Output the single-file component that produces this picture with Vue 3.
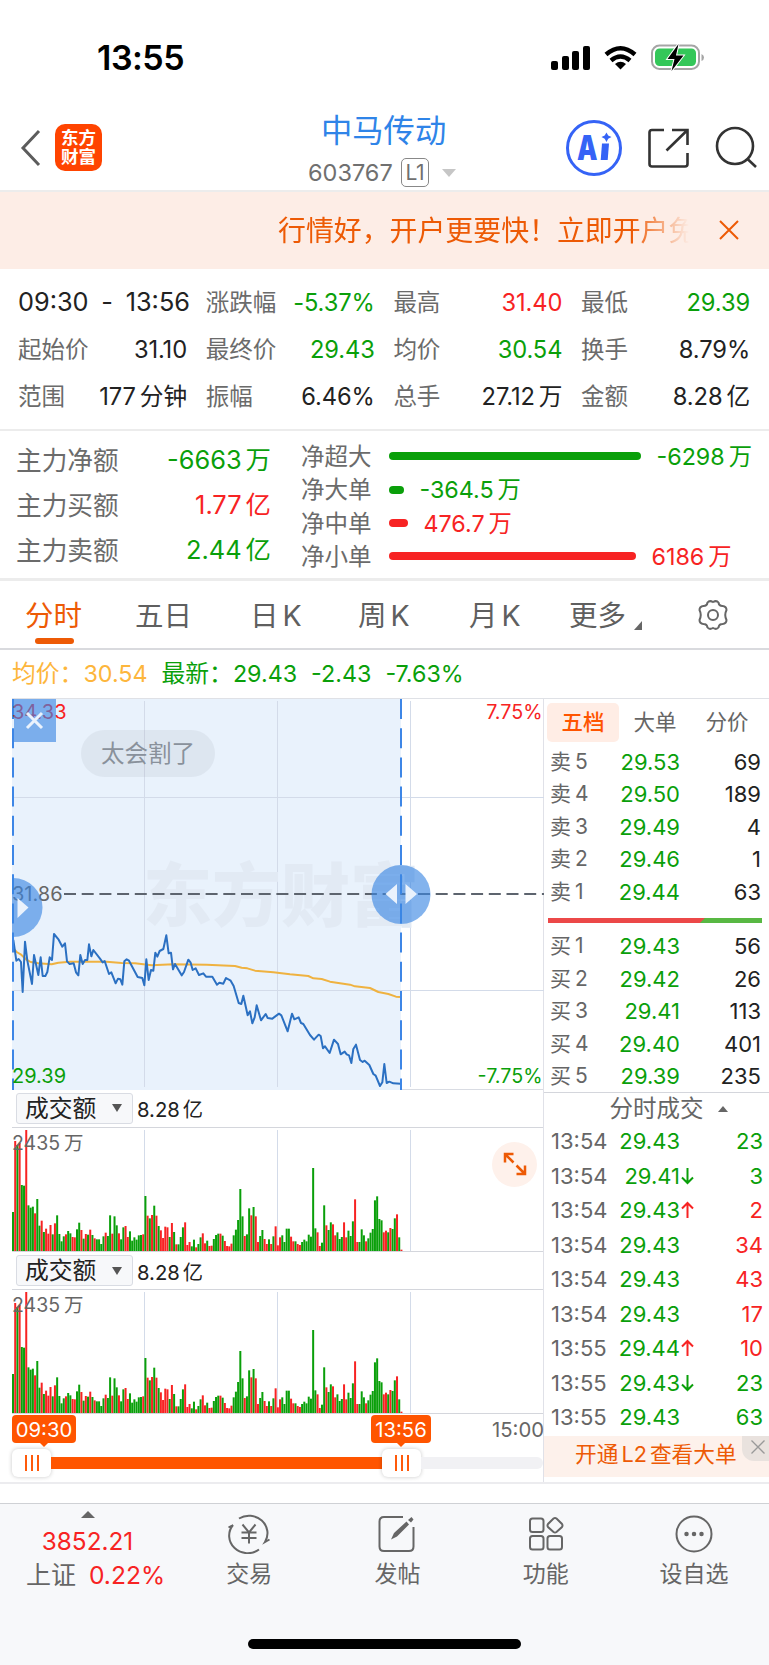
<template>
  <div class="page">
    <header class="status">
      <span class="clock">13:55</span>
      <svg class="signals" width="156" height="30" viewBox="0 0 156 30">
        <rect x="0" y="17" width="7" height="9" rx="2" />
        <rect x="11" y="12" width="7" height="14" rx="2" />
        <rect x="21" y="7" width="7" height="19" rx="2" />
        <rect x="32" y="2" width="7" height="24" rx="2" />
        <path class="wave" d="M55 10.5Q69.500 -2 84 10.500" />
        <path class="wave" d="M60 16.500Q69.500 8.500 79 16.500" />
        <path d="M69.500 25.500L64 20Q69.500 15.500 75 20Z" />
        <rect class="cell" x="101" y="1.500" width="47" height="23.500" rx="7.500" />
        <rect class="charge" x="104" y="4.500" width="41" height="17.500" rx="4.500" />
        <path class="cap" d="M150.500 10Q153 11 153 13.500T150.500 17Z" />
        <path class="bolt" d="M127.500 0L116.500 15H123.500L120.500 27L132.500 11.500H125Z" />
      </svg>
    </header>

    <nav class="nav">
      <svg class="back" width="22" height="38" viewBox="0 0 22 38"><path d="M19 2L3 19L19 36" /></svg>
      <div class="logo"><span>东方</span><span>财富</span></div>
      <div class="title">
        <h1>中马传动</h1>
        <p>603767<b>L1</b><i></i></p>
      </div>
      <svg class="nav-icons" width="196" height="60" viewBox="0 0 196 60">
        <circle class="ai-ring" cx="30" cy="30" r="26.500" />
        <text class="ai" x="13" y="41.500" textLength="20.500" lengthAdjust="spacingAndGlyphs">A</text>
        <path class="ai-fill" d="M38 25.500H45L43.700 42H36.700Z" />
        <path class="ai-fill" d="M42.500 14.500L44.200 17.500L47.500 19L44.200 20.700L42.500 24L40.700 20.700L37.500 19L40.700 17.500Z" />
        <path class="line" d="M100 12H88Q85.500 12 85.500 14.500V46Q85.500 48.500 88 48.500H121Q123.500 48.500 123.500 46V35M108 12H123.500V27M123 12.500L102.500 32.500" />
        <circle class="line" cx="171" cy="28" r="18" />
        <path class="line" d="M183.500 41L192 49" />
      </svg>
    </nav>

    <div class="banner">
      <span>行情好，开户更要快！立即开户免</span>
      <svg width="22" height="22" viewBox="0 0 22 22"><path d="M2 2L20 20M20 2L2 20" /></svg>
    </div>

    <section class="stats">
      <div class="range">09:30 <em>-</em> 13:56</div>
      <div v-for="s in stats" :key="s.label" class="stat">
        <span>{{ s.label }}</span>
        <b :class="s.tone">{{ s.value }}<u v-if="s.unit">{{ s.unit }}</u></b>
      </div>
    </section>

    <section class="flow">
      <div class="main-flow">
        <div v-for="m in mainFlow" :key="m.label">
          <span>{{ m.label }}</span>
          <b :class="m.tone">{{ m.value }}<u>{{ m.unit }}</u></b>
        </div>
      </div>
      <div class="net-flow">
        <div v-for="n in netFlow" :key="n.label">
          <span>{{ n.label }}</span>
          <i :class="n.tone" :style="{ width: n.width + 'px' }"></i>
          <b :class="n.tone">{{ n.value }}<u>万</u></b>
        </div>
      </div>
    </section>

    <div class="tabs">
      <span class="tab active">分时</span>
      <span class="tab">五日</span>
      <span class="tab">日<u>K</u></span>
      <span class="tab">周<u>K</u></span>
      <span class="tab">月<u>K</u></span>
      <span class="tab more">更多</span>
      <svg width="34" height="34" viewBox="0 0 34 34">
        <path d="M11.500 4.500Q13.500 2 17 4Q20.500 2 22.500 4.500Q23 8 26.500 8Q30.500 8.500 30.500 12Q28 17 30.500 22Q30.500 25.500 26.500 26Q23 26 22.500 29.500Q20.500 32 17 30Q13.500 32 11.500 29.500Q11 26 7.500 26Q3.500 25.500 3.500 22Q6 17 3.500 12Q3.500 8.500 7.500 8Q11 8 11.500 4.500Z" />
        <circle cx="17" cy="17" r="5" />
      </svg>
    </div>

    <div class="quote">
      <span class="avg">均价：</span><span class="avg num">30.54</span>
      <span class="green latest">最新：</span><span class="green num">29.43</span>
      <span class="green num delta">-2.43</span><span class="green num delta">-7.63%</span>
    </div>

    <div class="board">
      <div class="charts">
        <div class="price-chart">
          <svg width="532" height="391" viewBox="12 699 532 391">
            <rect class="selection" x="12" y="699" width="389" height="391" />
            <path class="grid" d="M144.500 701V1087M277.500 701V1087M410.500 701V1087M12 797.500H544M12 990.500H544" />
            <text class="watermark" x="143" y="921">东方财富</text>
            <path class="mid" d="M64 894H544" />
            <g transform="translate(0 900) scale(.33333)">
              <polyline class="avg-line" :points="avgPoints" />
              <polyline class="price-line" :points="pricePoints" />
            </g>
            <path class="edge" d="M13 699V1090M401 699V1090" />
            <text class="red" x="12" y="718.500">34.33</text>
            <text class="red end" x="542.500" y="718.500">7.75%</text>
            <text class="gray" x="12" y="900.500">31.86</text>
            <text class="green" x="12" y="1082.500">29.39</text>
            <text class="green end" x="542.500" y="1082.500">-7.75%</text>
            <rect class="knob" x="14" y="699" width="42" height="43" />
            <path class="cross" d="M27 713L42 728M42 713L27 728" />
            <circle class="knob" cx="13" cy="907.500" r="29.500" />
            <path class="arrow" d="M17.500 898L28.500 907.500L17.500 918Z" />
            <circle class="knob" cx="401" cy="894.500" r="29.500" />
            <path class="arrow" d="M397 884L385.500 894L397 904ZM405.500 884L417 894L405.500 904Z" />
          </svg>
          <div class="bubble">太会割了</div>
        </div>

        <div v-for="n in 2" :key="n" class="volume">
          <div class="picker">
            <div>成交额<i></i></div>
            <span>8.28<u>亿</u></span>
          </div>
          <div class="bars">
            <svg width="532" height="123" viewBox="0 0 532 123">
              <path class="grid" d="M132.500 2V123M265.500 2V123M398.500 2V123" />
              <rect
                v-for="(bar, i) in volumes"
                :key="i"
                :class="bar.tone"
                :x="i * 2.207"
                :y="123 - bar.height"
                width="2"
                :height="bar.height"
              />
            </svg>
            <span>2435<u>万</u></span>
            <div v-if="n === 1" class="expand">
              <svg width="24" height="24" viewBox="0 0 24 24">
                <path d="M10.500 2H2V10.500M2 2L10.500 10.500M13.500 22H22V13.500M22 22L13.500 13.500" />
              </svg>
            </div>
          </div>
        </div>

        <div class="timeline">
          <div class="times">
            <span class="flag">09:30</span>
            <span class="flag last">13:56</span>
            <span class="close">15:00</span>
          </div>
          <div class="slider">
            <span class="grip"><i></i><i></i><i></i></span>
            <span class="fill"></span>
            <span class="grip"><i></i><i></i><i></i></span>
            <span class="rest"></span>
          </div>
        </div>
      </div>

      <aside class="depth">
        <div class="depth-tabs"><span class="on">五档</span><span>大单</span><span>分价</span></div>
        <div v-for="r in sells" :key="'s' + r[0]" class="level">
          <span>卖<u>{{ r[0] }}</u></span><b>{{ r[1] }}</b><em>{{ r[2] }}</em>
        </div>
        <div class="ratio"></div>
        <div v-for="r in buys" :key="'b' + r[0]" class="level">
          <span>买<u>{{ r[0] }}</u></span><b>{{ r[1] }}</b><em>{{ r[2] }}</em>
        </div>
        <div class="deals-head">分时成交<i></i></div>
        <div v-for="(d, i) in deals" :key="i" class="deal">
          <span>{{ d[0] }}</span>
          <b>{{ d[1] }}</b>
          <svg width="15" height="20" viewBox="0 0 15 20">
            <path v-if="d[3] === 'up'" class="up" d="M7.500 18V3M2 8.500L7.500 3L13 8.500" />
            <path v-if="d[3] === 'down'" class="down" d="M7.500 2V17M2 11.500L7.500 17L13 11.500" />
          </svg>
          <em :class="d[4]">{{ d[2] }}</em>
        </div>
        <div class="promo">
          开通<u>L2</u><u>查看大单</u>
          <span>
            <svg width="16" height="16" viewBox="0 0 16 16"><path d="M1.500 1.500L14.500 14.500M14.500 1.500L1.500 14.500" /></svg>
          </span>
        </div>
      </aside>
    </div>

    <footer class="footer">
      <div class="actions">
        <div class="index">
          <i></i>
          <p class="red">3852.21</p>
          <p>上证<b class="red">0.22%</b></p>
        </div>
        <div class="action">
          <svg width="44" height="40" viewBox="0 0 44 40">
            <path d="M12 4.500A18.500 17.500 0 0 1 38 28L42.500 25.500M32 35.500A18.500 17.500 0 0 1 6 11L1.500 13.500" />
            <path d="M15.500 10.500L22 18.500L28.500 10.500M22 18.500V29.500M14.500 18.500H29.500M14.500 24H29.500" />
          </svg>
          <span>交易</span>
        </div>
        <div class="action">
          <svg width="44" height="40" viewBox="0 0 44 40">
            <path d="M28 3H9Q4.500 3 4.500 7.500V32.500Q4.500 37 9 37H34Q38.500 37 38.500 32.500V13" />
            <path class="pen" d="M16 25.500L19 19L31.500 7.500L34 10.500L22 22.500ZM33 6L36.500 3L38.500 5.500L36 8.500Z" />
          </svg>
          <span>发帖</span>
        </div>
        <div class="action">
          <svg width="44" height="40" viewBox="0 0 44 40">
            <rect x="6" y="4.500" width="13.500" height="13.500" rx="2.500" />
            <rect x="6" y="22" width="13.500" height="13.500" rx="2.500" />
            <rect x="23.500" y="22" width="14.500" height="13.500" rx="2.500" />
            <path d="M29.500 4.500Q31 3.500 32.500 4.500L38 10Q39 11.500 38 13L32.500 18Q31 19 29.500 18L24 13Q23 11.500 24 10Z" />
          </svg>
          <span>功能</span>
        </div>
        <div class="action">
          <svg width="44" height="40" viewBox="0 0 44 40">
            <circle cx="22" cy="20" r="17.500" />
            <path class="dots" d="M14.500 20H14.510M22 20H22.010M29.500 20H29.510" />
          </svg>
          <span>设自选</span>
        </div>
      </div>
      <div class="home"></div>
    </footer>
  </div>
</template>

<script setup>
const stats = [
  { label: '涨跌幅', value: '-5.37%', tone: 'green' },
  { label: '最高', value: '31.40', tone: 'red' },
  { label: '最低', value: '29.39', tone: 'green' },
  { label: '起始价', value: '31.10' },
  { label: '最终价', value: '29.43', tone: 'green' },
  { label: '均价', value: '30.54', tone: 'green' },
  { label: '换手', value: '8.79%' },
  { label: '范围', value: '177', unit: '分钟' },
  { label: '振幅', value: '6.46%' },
  { label: '总手', value: '27.12', unit: '万' },
  { label: '金额', value: '8.28', unit: '亿' },
];

const mainFlow = [
  { label: '主力净额', value: '-6663', unit: '万', tone: 'green' },
  { label: '主力买额', value: '1.77', unit: '亿', tone: 'red' },
  { label: '主力卖额', value: '2.44', unit: '亿', tone: 'green' },
];

const netFlow = [
  { label: '净超大', value: '-6298', width: 252, tone: 'green' },
  { label: '净大单', value: '-364.5', width: 15, tone: 'green' },
  { label: '净中单', value: '476.7', width: 19, tone: 'red' },
  { label: '净小单', value: '6186', width: 247, tone: 'red' },
];

const sells = [
  [5, '29.53', 69],
  [4, '29.50', 189],
  [3, '29.49', 4],
  [2, '29.46', 1],
  [1, '29.44', 63],
];

const buys = [
  [1, '29.43', 56],
  [2, '29.42', 26],
  [3, '29.41', 113],
  [4, '29.40', 401],
  [5, '29.39', 235],
];

// time, price, hands, tick direction, side
const deals = [
  ['13:54', '29.43', 23, '', 'green'],
  ['13:54', '29.41', 3, 'down', 'green'],
  ['13:54', '29.43', 2, 'up', 'red'],
  ['13:54', '29.43', 34, '', 'red'],
  ['13:54', '29.43', 43, '', 'red'],
  ['13:54', '29.43', 17, '', 'red'],
  ['13:55', '29.44', 10, 'up', 'red'],
  ['13:55', '29.43', 23, 'down', 'green'],
  ['13:55', '29.43', 63, '', 'green'],
];

const avgPoints =
  '40,145 50,156 62,163 78,178 92,186 115,190 155,193 175,188 210,185 320,185 365,189 405,190 455,196 520,193 620,194 705,198 725,203 742,205 765,212 820,217 870,223 925,228 940,235 965,237 990,245 1050,254 1065,259 1110,264 1135,276 1165,282 1188,290 1200,291';

const pricePoints =
  '40,120 49,182 56,177 63,186 68,276 75,125 82,182 96,252 102,165 115,225 122,172 128,228 136,228 142,216 149,172 156,180 162,102 176,119 187,140 195,130 201,184 209,192 221,190 228,217 235,226 241,165 248,192 255,180 262,180 267,133 274,169 280,150 300,176 308,187 314,183 327,222 334,217 347,250 354,236 361,238 367,254 373,184 380,178 387,182 413,231 427,234 433,256 439,178 446,240 453,210 460,212 466,158 472,170 479,153 490,147 499,106 506,160 513,158 519,208 525,192 545,226 552,216 565,179 572,188 578,210 587,205 597,225 610,220 618,230 637,230 651,254 658,248 670,251 678,234 692,242 701,258 716,309 724,312 730,287 743,346 750,334 757,370 764,352 770,316 783,361 797,342 803,354 817,356 837,341 844,346 863,394 876,341 883,358 896,352 903,369 910,372 930,405 942,419 956,404 962,408 969,445 975,439 989,459 1002,419 1014,432 1022,463 1034,455 1040,463 1047,466 1054,489 1060,447 1068,434 1080,480 1088,486 1094,482 1108,495 1120,522 1127,527 1140,558 1147,547 1153,492 1160,549 1168,545 1180,550 1202,551';

const rawVolumes =
  'g117 r330 g318 r324 g198 g196 r363 g137 g130 g133 r113 g156 g76 r91 g57 r67 r52 r78 g50 r83 g107 g51 g29 g44 r50 g60 g53 r42 r41 g65 g85 r63 g37 r51 g49 r64 g48 r38 g35 g35 g21 g44 r55 g45 g107 r52 g104 g77 r53 g35 g71 r75 r42 g59 g31 g41 g34 g47 g48 r50 g165 r106 g98 r108 g136 r106 g75 r62 r39 r73 r71 g42 r84 g57 r20 g20 g42 g71 r86 r18 r27 g14 g34 r11 g21 g41 r53 r23 g31 r15 r16 g36 g48 g52 r52 g46 r30 r15 r14 r22 g47 g64 g93 g186 g104 r45 g50 g128 r107 g132 r104 r27 g45 g63 r36 r21 g35 r21 g44 r74 r17 r41 g47 g27 g67 g67 r43 r29 g29 r21 r18 g27 g34 g29 g49 g43 g249 g68 r56 r15 g25 g137 r77 g63 g86 r80 r47 g56 g36 g42 r86 r41 g61 g45 g89 r155 r27 g27 g65 g47 r29 g38 g55 g66 g152 g164 g96 g92 r56 r61 g56 r69 g66 g98 r110 g41 r4';

const volumes = rawVolumes.split(' ').map((v) => ({
  tone: v[0] === 'r' ? 'red' : 'green',
  height: Number(v.slice(1)) / 3,
}));
</script>

<style>
body {
  margin: 0;
  background: #fff;
}
</style>

<style scoped>
* {
  box-sizing: border-box;
}

.page {
  width: 769px;
  height: 1665px;
  overflow: hidden;
  display: flex;
  flex-direction: column;
  font-family: Inter, "Noto Sans CJK SC", sans-serif;
  font-weight: 400;
  color: #222;
  white-space: nowrap;
}

p, h1 {
  margin: 0;
  font-weight: 400;
}

b, em, i {
  font-weight: 400;
  font-style: normal;
}

u {
  text-decoration: none;
  margin-left: 4px;
}

svg {
  display: block;
  flex: none;
}

path, circle {
  fill: none;
}

.red {
  color: #f72323;
  fill: #f72323;
}

.green {
  color: #0a9f0a;
  fill: #0a9f0a;
}

.status {
  height: 96px;
  padding: 37px 62px 0 97px;
  display: flex;
  justify-content: space-between;
}

.clock {
  font-size: 34px;
  font-weight: 600;
  line-height: 41px;
  letter-spacing: -0.5px;
  color: #000;
}

.signals {
  margin-top: 7px;
}

.signals path {
  fill: #000;
}

.signals .wave {
  fill: none;
  stroke: #000;
  stroke-width: 4.5;
}

.signals .cell {
  fill: none;
  stroke: #a5a5a5;
  stroke-width: 2;
}

.signals .charge {
  fill: #34c759;
}

.signals .cap {
  fill: #a5a5a5;
}

.signals .bolt {
  stroke: #fff;
  stroke-width: 2;
  paint-order: stroke;
}

.nav {
  height: 96px;
  padding-left: 20px;
  border-bottom: 2px solid #ececec;
  display: flex;
  align-items: flex-start;
}

.back {
  margin-top: 33px;
}

.back path {
  stroke: #5c5c5c;
  stroke-width: 3;
}

.logo {
  width: 47px;
  height: 47px;
  margin: 28px 0 0 13px;
  padding-top: 4px;
  border-radius: 10px;
  background: #ff4400;
  color: #fff;
  font-size: 17.500px;
  font-weight: 600;
  line-height: 19.500px;
  display: flex;
  flex-direction: column;
  align-items: center;
}

.title {
  width: 463px;
  padding-left: 101px;
  display: flex;
  flex-direction: column;
  align-items: flex-start;
}

.title h1 {
  margin: 14px 0 0 118px;
  font-size: 31.300px;
  line-height: 42px;
  color: #2f84e8;
}

.title p {
  margin: 6px 0 0 105px;
  font-size: 23.500px;
  line-height: 30px;
  color: #707070;
  display: flex;
  align-items: center;
}

.title b {
  height: 29px;
  width: 28px;
  margin-left: 8px;
  border: 1.5px solid #888;
  border-radius: 5px;
  font-size: 21px;
  line-height: 27px;
  letter-spacing: -0.5px;
  text-align: center;
}

.title i {
  margin-left: 13px;
  border: 7px solid transparent;
  border-top: 8px solid #c6c6c6;
  border-bottom: 0;
}

.nav-icons {
  margin: 22px 0 0 -1px;
}

.ai-ring {
  stroke: #3563f6;
  stroke-width: 3;
}

.ai {
  font-size: 34px;
  font-weight: 900;
  fill: #3563f6;
}

.ai-fill {
  fill: #3563f6;
}

.line {
  stroke: #333;
  stroke-width: 2.6;
}

.banner {
  height: 77px;
  padding: 0 29px 0 278px;
  background: #fdede6;
  display: flex;
  align-items: center;
  justify-content: space-between;
  font-size: 27.900px;
  color: #ed5a05;
}

.banner span {
  width: 411px;
  margin-top: -2px;
  mask-image: linear-gradient(to right, #000 86%, transparent 100%);
}

.banner path {
  stroke: #ed5a05;
  stroke-width: 2;
}

.stats {
  height: 162px;
  padding: 9px 19px 13px 18px;
  border-bottom: 2px solid #ececec;
  display: grid;
  grid-template-columns: repeat(4, 169px);
  column-gap: 18.700px;
  grid-template-rows: repeat(3, 47px);
  align-items: center;
  font-size: 23.500px;
}

.range {
  display: flex;
  justify-content: space-between;
  font-size: 25.300px;
  margin-right: -3px;
}

.stat {
  display: flex;
  justify-content: space-between;
  align-items: baseline;
}

.stat b {
  font-size: 23.700px;
  letter-spacing: -0.1px;
}

.stat span, .flow span {
  color: #6b6b6b;
}

.flow {
  height: 150px;
  border-bottom: 3px solid #ececec;
  display: flex;
  font-size: 23.500px;
}

.main-flow {
  width: 302px;
  padding: 5px 31px 0 16px;
  font-size: 25.700px;
}

.main-flow div {
  height: 45px;
  display: flex;
  align-items: center;
  justify-content: space-between;
}

.main-flow b {
  font-size: 25.400px;
}

.net-flow {
  padding-top: 9px;
}

.net-flow div {
  height: 33.300px;
  display: flex;
  align-items: center;
}

.net-flow span, .net-flow b {
  position: relative;
  top: -1.500px;
}

.net-flow span {
  margin-left: -1px;
}

.net-flow i {
  height: 8px;
  margin: 0 16px 0 17px;
  border-radius: 4px;
  background: currentColor;
}

.net-flow b {
  font-size: 23.300px;
}

.tabs {
  height: 69px;
  padding-left: 25px;
  border-bottom: 2px solid #d9dade;
  display: flex;
  align-items: center;
  font-size: 28.500px;
  line-height: 42px;
  color: #5f5f5f;
}

.tab {
  position: relative;
  top: 2px;
  width: 110px;
}

.tab:nth-child(2) {
  width: 115px;
}

.tab:nth-child(3) {
  width: 108px;
}

.tab:nth-child(4) {
  width: 111px;
}

.tab:nth-child(5) {
  width: 100px;
}

.tab.more {
  width: 127px;
}

.tabs svg {
  margin-top: 2px;
}

.tab.active {
  color: #ed5a05;
}

.tab.active::after {
  content: "";
  position: absolute;
  left: 10px;
  bottom: -7px;
  width: 39px;
  height: 6px;
  border-radius: 3px;
  background: #ed5a05;
}

.more::after {
  content: "";
  position: absolute;
  left: 65px;
  bottom: 7px;
  border-left: 8px solid transparent;
  border-bottom: 9px solid #666;
}

.tabs path, .tabs circle {
  stroke: #666;
  stroke-width: 2;
}

.quote {
  height: 48px;
  padding-left: 12px;
  display: flex;
  align-items: center;
  font-size: 23.800px;
  line-height: 34px;
}

.num {
  padding-top: 1px;
  font-size: 23.300px;
}

.avg {
  color: #fdb63c;
}

.latest {
  margin-left: 14px;
}

.delta {
  margin-left: 14px;
}

.board {
  height: 785px;
  display: flex;
  margin-left: 12px;
  border-top: 1px solid #dfe1e6;
}

.charts {
  width: 532px;
  border-right: 1.500px solid #e0e1e8;
}

.price-chart {
  position: relative;
  height: 391px;
  border-bottom: 1px solid #d9dce3;
}

.price-chart svg {
  overflow: hidden;
}

.price-chart text {
  font-size: 20px;
}

.price-chart .end {
  font-size: 19.700px;
  text-anchor: end;
}

.gray {
  fill: #666;
}

.selection {
  fill: #e9f2fc;
}

.grid {
  stroke: #d3dbe9;
  stroke-width: 1;
}

.price-chart .watermark {
  font-size: 69px;
  font-weight: 900;
  fill: #e2eaf4;
}

.mid {
  stroke: #5d646e;
  stroke-width: 2;
  stroke-dasharray: 12 5.700;
}

polyline {
  fill: none;
  stroke-linejoin: round;
}

.avg-line {
  stroke: #efb240;
  stroke-width: 6;
}

.price-line {
  stroke: #2b70c2;
  stroke-width: 6;
}

.edge {
  stroke: #3d86e6;
  stroke-width: 2;
  stroke-dasharray: 20 9.200;
}

.knob {
  fill: #3b86e3;
  fill-opacity: 0.63;
}

.cross {
  stroke: #eaf2fc;
  stroke-width: 3;
}

.arrow {
  fill: #eaf2fc;
}

.bubble {
  position: absolute;
  left: 69px;
  top: 31px;
  width: 134px;
  height: 47px;
  border-radius: 24px;
  background: rgba(160, 170, 180, 0.16);
  color: #89919b;
  font-size: 23.500px;
  line-height: 48px;
  text-align: center;
}

.volume {
  height: 162px;
}

.picker {
  height: 38px;
  padding-left: 4px;
  border-bottom: 1px solid #d4d6dc;
  display: flex;
  align-items: center;
  font-size: 20.300px;
}

.volume + .volume .picker {
  padding-top: 1px;
}

.picker div {
  width: 117px;
  height: 31px;
  padding: 0 10px 0 8px;
  border: 1px solid #d9dce3;
  border-radius: 3px;
  background: #f7f8fa;
  display: flex;
  align-items: center;
  justify-content: space-between;
  font-size: 23.800px;
  line-height: 29px;
}

.picker i {
  border: 5px solid transparent;
  border-top: 8px solid #555;
  border-bottom: 0;
}

.picker > span {
  margin-left: 4px;
}

.picker > span u {
  margin-left: 3px;
}

.bars {
  position: relative;
  height: 124px;
  border-bottom: 1px solid #d4d6dc;
}

.bars > span {
  position: absolute;
  left: 0;
  top: 2px;
  font-size: 19.500px;
  line-height: 26px;
  color: #666;
}

.expand {
  position: absolute;
  right: 6px;
  top: 14px;
  width: 45px;
  height: 45px;
  border-radius: 50%;
  background: #fef1eb;
  display: grid;
  place-items: center;
}

.expand path {
  stroke: #ed5a05;
  stroke-width: 2.500;
}

.times {
  height: 35px;
  padding-top: 1px;
  display: flex;
  font-size: 20.300px;
  line-height: 29px;
}

.flag {
  position: relative;
  width: 64px;
  height: 28px;
  border-radius: 4px;
  background: #ff5500;
  color: #fff;
  text-align: center;
}

.flag.last {
  width: 60px;
  margin-left: 295px;
}

.flag::after {
  content: "";
  position: absolute;
  left: 50%;
  top: 28px;
  margin-left: -4px;
  border: 4px solid transparent;
  border-top-color: #ff5500;
  border-bottom: 0;
}

.close {
  margin-left: auto;
  margin-right: -1px;
  color: #666;
}

.slider {
  height: 28px;
  display: flex;
  align-items: center;
}

.grip {
  width: 39px;
  height: 28px;
  border-radius: 6px;
  background: #fff;
  box-shadow: 0 0 4px rgba(0, 0, 0, 0.22);
  display: flex;
  align-items: center;
  justify-content: center;
  gap: 4px;
}

.grip i {
  width: 2px;
  height: 16px;
  background: #ff5a0a;
}

.fill {
  width: 331px;
  height: 12px;
  background: #ff5500;
}

.rest {
  flex: 1;
  height: 12px;
  border-radius: 0 6px 6px 0;
  background: #f1f1f4;
}

.depth {
  width: 225px;
  font-size: 22px;
}

.depth-tabs {
  height: 47px;
  padding: 4px 0 0 3px;
  display: flex;
  color: #666;
  font-size: 21.500px;
  line-height: 38px;
}

.depth-tabs span {
  width: 72px;
  height: 39px;
  text-align: center;
}

.depth-tabs .on {
  border-radius: 5px;
  background: #ffede5;
  color: #ff5500;
  font-weight: 500;
}

.level, .deal {
  height: 32.500px;
  display: flex;
  align-items: center;
  padding: 0 8px 0 6px;
  line-height: 32px;
}

.level span, .deal span {
  width: 63px;
  color: #666;
}

.level span {
  font-size: 21px;
}

.level b, .deal b {
  width: 67px;
  text-align: right;
  color: #0a9f0a;
}

.level em, .deal em {
  margin-left: auto;
}

.ratio {
  width: 214px;
  height: 5px;
  margin: 10px 0 7px 4px;
  background: linear-gradient(135deg, #ec4848 71.500%, #58b843 71.800%);
}

.deals-head {
  height: 34px;
  margin-top: -1px;
  padding-left: 24px;
  border-top: 1px solid #d4d6dc;
  display: flex;
  align-items: center;
  justify-content: center;
  font-size: 23.500px;
  line-height: 30px;
  color: #666;
}

.deals-head i {
  margin-left: 14px;
  border: 5px solid transparent;
  border-bottom: 6px solid #666;
  border-top: 0;
}

.deal {
  height: 34.500px;
  padding-right: 6px;
  padding-bottom: 3px;
}

.deal span {
  padding-left: 1px;
  font-size: 22px;
}

.deal path {
  stroke-width: 2;
}

.up {
  stroke: #f72323;
}

.down {
  stroke: #0a9f0a;
}

.promo {
  position: relative;
  height: 41px;
  padding-left: 31px;
  background: #fdf1eb;
  color: #ed5a05;
  font-size: 21.700px;
  line-height: 36px;
}

.promo u {
  margin-left: 3px;
}

.promo span {
  position: absolute;
  right: 0;
  top: 0;
  width: 27px;
  height: 25px;
  border-radius: 0 0 0 12px;
  background: #e9e2de;
  padding: 3px 0 0 8px;
}

.promo path {
  stroke: #999;
  stroke-width: 1.300;
}

.footer {
  height: 183px;
  padding-top: 19px;
  border-top: 2px solid #ececef;
  background: linear-gradient(#fff 19px, #f7f8fa 19px);
}

.actions {
  height: 138px;
  border-top: 1.500px solid #cfd1d5;
  display: flex;
  color: #666;
}

.index {
  width: 175px;
  height: 100px;
  display: flex;
  flex-direction: column;
  align-items: center;
  font-size: 24.300px;
}

.index i {
  margin-top: 7px;
  border: 7px solid transparent;
  border-bottom: 7px solid #666;
  border-top: 0;
}

.index p {
  margin-top: 7px;
  line-height: 32px;
}

.index p + p {
  margin: 2px 0 0 16px;
  font-size: 25px;
}

.index b {
  margin-left: 13px;
  font-size: 24.600px;
}

.action {
  width: 148.300px;
  padding-top: 10px;
  display: flex;
  flex-direction: column;
  align-items: center;
  font-size: 23px;
  line-height: 34px;
}

.action span {
  margin-top: 3px;
}

.action path, .action circle, .action rect {
  fill: none;
  stroke: #666;
  stroke-width: 2;
}

.action .pen {
  fill: #666;
  stroke: none;
}

.action .dots {
  stroke-width: 4.500;
  stroke-linecap: round;
}

.home {
  width: 273px;
  height: 10px;
  margin: -2px auto 0;
  border-radius: 5px;
  background: #000;
}
</style>
